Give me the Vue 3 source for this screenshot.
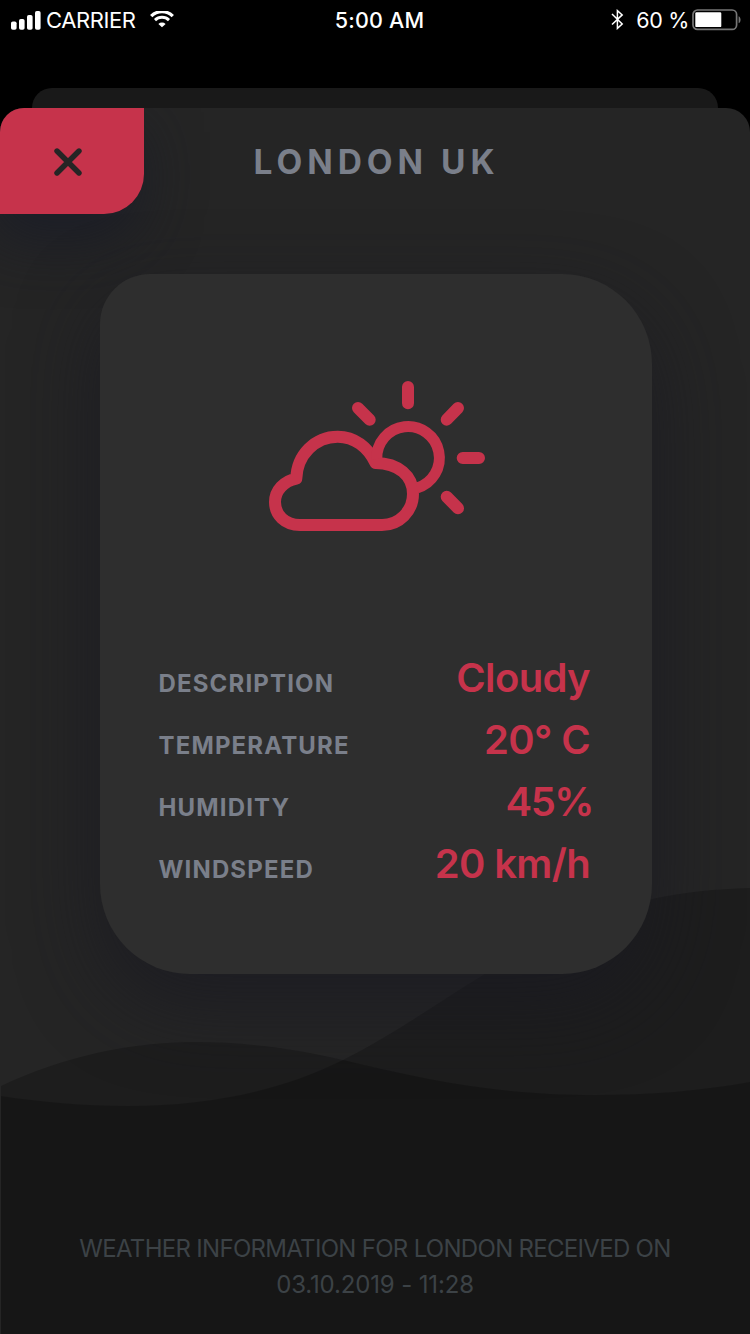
<script setup>
const details = [
  { label: 'Description', value: 'Cloudy' },
  { label: 'Temperature', value: '20° C' },
  { label: 'Humidity', value: '45%', tight: true },
  { label: 'Windspeed', value: '20 km/h' },
]
</script>

<template>
  <div class="screen">
    <header class="status">
      <div class="status-left">
        <svg class="signal" width="30" height="19" viewBox="0 0 30 19" fill="#fff">
          <rect x="0" y="10.5" width="5.6" height="8.2" rx="1.8" />
          <rect x="8" y="8" width="5.6" height="10.7" rx="1.8" />
          <rect x="16" y="4" width="5.6" height="14.7" rx="1.8" />
          <rect x="24" y="0" width="5.6" height="18.7" rx="1.8" />
        </svg>
        <span class="carrier">CARRIER</span>
        <svg class="wifi" width="24" height="17" viewBox="0 0 24 17" fill="none" stroke="#fff">
          <path d="M1.2 5.1A15.5 15.5 0 0 1 22.8 5.1" stroke-width="3.3" />
          <path d="M5 9.1A10 10 0 0 1 19 9.1" stroke-width="2.9" />
          <path d="M12 16.2L8.4 12.9A5.2 5.2 0 0 1 15.6 12.9Z" fill="#fff" stroke="none" />
        </svg>
      </div>
      <span class="time">5:00 AM</span>
      <div class="status-right">
        <svg class="bluetooth" width="13" height="21" viewBox="0 0 13 21" fill="none" stroke="#fff" stroke-width="1.5">
          <path d="M1 5L11.2 15L6.4 19.4V1.6L11.2 5.9L1 15.5" />
        </svg>
        <span class="percent">60 %</span>
        <svg class="battery" width="50" height="22" viewBox="0 0 50 22">
          <rect x="1" y="1" width="43.6" height="19.4" rx="4.5" fill="none" stroke="#767676" stroke-width="1.7" />
          <rect x="3.3" y="3.3" width="26" height="14.8" rx="1.2" fill="#fff" />
          <path d="M46.6 7.2C49.2 8.2 49.2 13.2 46.6 14.2Z" fill="#767676" />
        </svg>
      </div>
    </header>

    <div class="back-sheet"></div>
    <main class="sheet">
      <svg class="waves" width="750" height="1226" viewBox="0 108 750 1226">
        <path d="M1 1086C65 1056 130 1042 196 1042C250 1042 300 1050 343 1060C430 1081 500 1095 595 1095C650 1095 700 1091 750 1082V1334H1Z" />
        <path d="M1 1096C40 1102 85 1106 128 1106C210 1106 280 1091 343 1060C395 1034 435 1004 485 974C540 940 600 911 652 899C685 892 715 889 750 888V1334H1Z" />
      </svg>

      <div class="top">
        <button class="close" aria-label="Close">
          <svg width="28" height="28" viewBox="0 0 28 28" stroke="#252525" stroke-width="5.4" stroke-linecap="round">
            <path d="M3 3L25 25M25 3L3 25" />
          </svg>
        </button>
        <h1 class="title">LONDON UK</h1>
      </div>

      <section class="card">
        <svg class="weather" width="216" height="151" viewBox="269 380 216 151" fill="none" stroke="#c6334b" stroke-width="12" stroke-linecap="round" stroke-linejoin="round">
          <path d="M300 525H382A31 31 0 0 0 413 494C413 476 398.500 463 375.500 462.900C368 447 354.500 436.700 337.700 436.700C315 436.700 297 455 296.300 478.600C284 481 275 490.500 275 502C275 515 285 525 300 525Z" />
          <path d="M376.800 459A31.300 31.300 0 1 1 417 487.900" stroke-width="11" stroke-linecap="butt" />
          <path d="M408 387V403.300M458 408L446.700 419.700M358 408L369.700 419.700M462.700 458H479M446.700 496.700L458 508.300" />
        </svg>
        <dl class="details">
          <div v-for="item in details" :key="item.label" class="row">
            <dt>{{ item.label }}</dt>
            <dd :class="{ tight: item.tight }">{{ item.value }}</dd>
          </div>
        </dl>
      </section>

      <footer class="received">
        <p class="line">WEATHER INFORMATION FOR LONDON RECEIVED ON</p>
        <p class="line date">03.10.2019 - 11:28</p>
      </footer>
    </main>
  </div>
</template>

<style>
body {
  background: #000;
}
</style>

<style scoped>
.screen {
  width: 750px;
  height: 1334px;
  overflow: hidden;
  display: flex;
  flex-direction: column;
  background: #000;
  font-family: Inter, "Liberation Sans", sans-serif;
}
.status {
  height: 88px;
  flex: none;
  display: grid;
  grid-template-columns: 1fr auto 1fr;
  align-items: start;
  color: #fff;
  font-size: 22px;
  line-height: 41px;
}
.status-left,
.status-right {
  display: flex;
}
.signal {
  margin: 11px 5px 0 11px;
}
.carrier {
  letter-spacing: -0.4px;
}
.wifi {
  margin: 11px 0 0 14px;
}
.time {
  font-weight: 550;
  font-size: 21.5px;
  padding-left: 9px;
  letter-spacing: 0.2px;
}
.status-right {
  justify-content: flex-end;
}
.bluetooth {
  margin: 9px 12px 0 0;
}
.percent {
  font-size: 21.5px;
  letter-spacing: -0.35px;
}
.battery {
  margin: 9px 8px 0 3px;
}
.back-sheet {
  flex: none;
  height: 20px;
  margin: 0 32px;
  border-radius: 20px 20px 0 0;
  background: #191919;
}
.sheet {
  position: relative;
  flex: 1;
  overflow: hidden;
  display: flex;
  flex-direction: column;
  border-radius: 24px 24px 0 0;
  background: #252525;
}
.waves {
  position: absolute;
  inset: 0;
  fill: #000;
  fill-opacity: 0.215;
}
.top {
  position: relative;
  height: 106px;
  display: grid;
  grid-template-columns: 144px 1fr 144px;
  align-items: center;
}
.close {
  height: 106px;
  border: 0;
  padding: 2px 8px 0 0;
  display: grid;
  place-items: center;
  background: #c6334b;
  border-radius: 0 0 40px 0;
  box-shadow: -6px 24px 60px rgba(25, 27, 40, 0.8);
}
.title {
  margin: 1px 0 0;
  text-align: center;
  color: #7a7f8a;
  font-size: 33.500px;
  font-weight: 650;
  letter-spacing: 4.950px;
  text-indent: 3px;
}
.card {
  position: relative;
  box-sizing: border-box;
  width: 552px;
  height: 700px;
  margin: 60px 0 0 100px;
  padding: 106px 62px 0 58.500px;
  background: #2e2e2e;
  border-radius: 50px 90px 90px 90px;
  box-shadow: 0 30px 80px rgba(26, 26, 34, 0.8);
}
.weather {
  display: block;
  margin-left: 110.500px;
}
.details {
  margin: 116px 0 0;
}
.row {
  height: 62px;
  display: flex;
  justify-content: space-between;
  align-items: baseline;
}
dt {
  color: #7a7f8a;
  font-size: 24px;
  font-weight: 650;
  letter-spacing: 1.150px;
  text-transform: uppercase;
}
dd {
  margin: 0;
  color: #c6334b;
  font-size: 40px;
  line-height: 62px;
  font-weight: 560;
  letter-spacing: -0.650px;
}
dd.tight {
  margin-right: -3px;
  letter-spacing: -1.500px;
}
.received {
  position: relative;
  margin-top: 257px;
  text-align: center;
  color: #3c4246;
  font-size: 24px;
  line-height: 36px;
}
.line {
  margin: 0;
  letter-spacing: -0.700px;
}
.date {
  letter-spacing: -0.150px;
}
</style>
